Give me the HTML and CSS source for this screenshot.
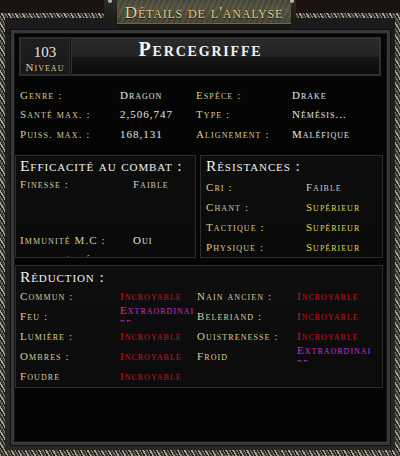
FILE: index.html
```html
<!DOCTYPE html>
<html lang="fr">
<head>
<meta charset="utf-8">
<title>Détails de l'analyse</title>
<link rel="stylesheet" href="styles.css">
</head>
<body>
<div class="stage">
  <div class="frame">
    <div class="panel">
      <div class="header">
        <div class="level">
          <span class="lvl-num">103</span>
          <span class="lvl-label">Niveau</span>
        </div>
        <div class="namebar"><span class="name">Percegriffe</span></div>
      </div>

      <div class="stats">
        <span class="lbl">Genre :</span><span class="val">Dragon</span>
        <span class="lbl">Espèce :</span><span class="val">Drake</span>
        <span class="lbl">Santé max. :</span><span class="val">2,506,747</span>
        <span class="lbl">Type :</span><span class="val">Némésis...</span>
        <span class="lbl">Puiss. max. :</span><span class="val">168,131</span>
        <span class="lbl">Alignement :</span><span class="val">Maléfique</span>
      </div>

      <div class="mid">
        <section class="box combat">
          <h2 class="box-title">Efficacité au combat :</h2>
          <div class="rows combat-rows">
            <span class="lbl">Finesse :</span><span class="val grey">Faible</span>
            <span class="lbl"></span><span class="val"></span>
            <span class="lbl"></span><span class="val"></span>
            <span class="lbl">Immunité M.C :</span><span class="val">Oui</span>
            <span class="lbl">Immunité P.É :</span><span class="val">Non</span>
          </div>
        </section>
        <section class="box resist">
          <h2 class="box-title">Résistances :</h2>
          <div class="rows resist-rows">
            <span class="lbl">Cri :</span><span class="val grey">Faible</span>
            <span class="lbl">Chant :</span><span class="val sup">Supérieur</span>
            <span class="lbl">Tactique :</span><span class="val sup">Supérieur</span>
            <span class="lbl">Physique :</span><span class="val sup">Supérieur</span>
          </div>
        </section>
      </div>

      <section class="box reduction">
        <h2 class="box-title">Réduction :</h2>
        <div class="rows red-rows">
          <span class="lbl">Commun :</span><span class="val inc">Incroyable</span>
          <span class="lbl">Nain ancien :</span><span class="val inc">Incroyable</span>
          <span class="lbl">Feu :</span><span class="val ext">Extraordinaire</span>
          <span class="lbl">Beleriand :</span><span class="val inc">Incroyable</span>
          <span class="lbl">Lumière :</span><span class="val inc">Incroyable</span>
          <span class="lbl">Ouistrenesse :</span><span class="val inc">Incroyable</span>
          <span class="lbl">Ombres :</span><span class="val inc">Incroyable</span>
          <span class="lbl">Froid</span><span class="val ext">Extraordinaire</span>
          <span class="lbl">Foudre</span><span class="val inc">Incroyable</span>
        </div>
      </section>
    </div>
  </div>

  <div class="plate">
    <span class="post post-l"></span>
    <span class="post post-r"></span>
    <div class="plate-inner">Détails de l'analyse</div>
  </div>
</div>
</body>
</html>
```

FILE: styles.css
```css
* { box-sizing: border-box; }

html, body {
  margin: 0;
  padding: 0;
}

body {
  background: #1c1214;
  font-family: "Liberation Serif", "DejaVu Serif", serif;
  font-variant: small-caps;
}

.stage {
  position: relative;
  width: 400px;
  height: 456px;
  overflow: hidden;
}

/* outer ornate frame */
.frame {
  margin-top: 13px;
  height: 443px;
  border: 5px solid transparent;
  border-bottom-width: 6px;
  background:
    linear-gradient(#1b1b1b, #272727) padding-box,
    repeating-linear-gradient(60deg, #a8a291 0 1.5px, #3a372f 1.5px 3.5px, #7c776a 3.5px 4.5px, #24221d 4.5px 6px) border-box;
  padding: 12px 5px 5px 6px;
}

.panel {
  height: 100%;
  border: 3px solid #383838;
  box-shadow: 0 0 0 1px #0f0f0f, inset 0 0 0 1px #151515;
  background: #050505;
  padding: 5px 4px 0 1px;
}

/* header */
.header {
  display: flex;
  gap: 1px;
  height: 37px;
  margin: 0 3px 0 5px;
  background: #0c0c0c;
  box-shadow: 0 0 0 1px #2e2e2e;
}

.level {
  width: 50px;
  display: flex;
  flex-direction: column;
  align-items: center;
  padding-top: 5px;
  background: linear-gradient(#1f1f1f, #181818);
  border: 1px solid #2c2c2c;
}

.lvl-num {
  font-size: 15px;
  line-height: 17px;
  color: #e8e8e8;
}

.lvl-label {
  font-size: 11px;
  line-height: 12px;
  letter-spacing: 1px;
  color: #dccf98;
}

.namebar {
  flex: 1;
  display: flex;
  justify-content: center;
  padding-right: 50px;
  background: linear-gradient(#2b2b2b 0, #232323 50%, #161616 52%, #0b0b0b 100%);
  border: 1px solid #333;
}

.name {
  font-size: 20px;
  line-height: 20px;
  font-weight: bold;
  letter-spacing: 1.8px;
  color: #f4f4f4;
}

/* generic label / value text */
.lbl {
  font-size: 11px;
  letter-spacing: 1.1px;
  color: #d9cc98;
  white-space: nowrap;
}

.val {
  font-size: 11px;
  letter-spacing: 1px;
  color: #e6e6e6;
  white-space: nowrap;
}

.val.grey { color: #c9c9c9; }
.val.sup { color: #e0d64a; }
.val.inc { color: #d2101e; }
.val.ext {
  color: #c42fd2;
  white-space: normal;
  word-break: break-all;
  width: 75px;
  line-height: 12px;
  height: 18px;
  overflow: hidden;
  align-self: start;
  margin-top: -2px;
}

/* general stats */
.stats {
  display: grid;
  grid-template-columns: 100px 76px 96px 1fr;
  grid-auto-rows: 19.5px;
  align-items: center;
  margin: 10px 0 0 5px;
}

/* boxes */
.mid {
  display: flex;
  gap: 4px;
  margin-top: 11.5px;
  height: 103px;
}

.box {
  border: 1px solid #2d2d2d;
  background: linear-gradient(#0d0d0d, #0a0a0a);
  overflow: hidden;
}

.box-title {
  margin: 0;
  font-weight: normal;
  font-size: 15.5px;
  line-height: 18px;
  letter-spacing: 0.9px;
  color: #f2f2f2;
  white-space: nowrap;
}

.combat {
  width: 181px;
  padding: 1px 4px 0;
}

.resist {
  flex: 1;
  padding: 1px 5px 0;
}

.rows {
  display: grid;
  align-items: center;
}

.combat-rows {
  grid-template-columns: 113px 1fr;
  grid-template-rows: repeat(4, 18.5px) 21px;
}

.resist-rows {
  grid-template-columns: 100px 1fr;
  grid-auto-rows: 20px;
  margin-top: 2px;
}

.reduction {
  margin-top: 7px;
  height: 123px;
  padding: 2px 4px 0;
  background: linear-gradient(#0e0e0e, #0b0b0b);
}

.red-rows {
  grid-template-columns: 100px 77px 100px 1fr;
  grid-auto-rows: 20px;
}

/* title plate */
.plate {
  position: absolute;
  left: 104px;
  top: 0;
  width: 192px;
  height: 29px;
  padding: 0 5px 5px 13px;
  background: linear-gradient(#2c2a24, #15140f);
  clip-path: polygon(0 0, 100% 0, 100% 72%, 98% 72%, 97% 100%, 7% 100%, 6% 72%, 0 72%);
}

.post {
  position: absolute;
  top: 0;
  width: 4px;
  height: 3px;
  background: #b8b4a6;
  border-radius: 0 0 2px 2px;
}

.post-l { left: 4px; }
.post-r { right: 2px; }

.plate-inner {
  height: 100%;
  display: flex;
  align-items: center;
  justify-content: center;
  padding-top: 2px;
  background:
    repeating-linear-gradient(115deg, rgba(0,0,0,0.08) 0 2px, rgba(255,255,255,0.04) 2px 5px),
    linear-gradient(#4a4839, #55533f 40%, #45432f);
  border-bottom: 1px solid #6a6754;
  box-shadow: 0 1px 0 #111;
  font-size: 17px;
  letter-spacing: 0.8px;
  color: #dfcd8c;
  text-shadow: 0 1px 1px #111;
  white-space: nowrap;
}
```
